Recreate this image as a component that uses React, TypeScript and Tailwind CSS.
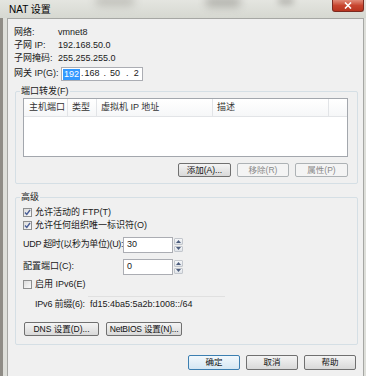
import React from "react";

type BtnProps = {
  children: React.ReactNode;
  className?: string;
  disabled?: boolean;
  focused?: boolean;
};

const Btn = ({ children, className = "", disabled, focused }: BtnProps) => {
  const look = disabled
    ? "border-[#adb2b5] bg-[#f4f4f4] text-[#8a8a8a]"
    : focused
      ? "border-[#3c7fb1] bg-linear-to-b from-[#f2f8fc] to-[#d5e7f3] text-[#111]"
      : "border-[#707070] bg-linear-to-b from-[#f4f4f4] to-[#d9d9d9] text-[#111]";
  return (
    <div
      className={`flex items-center justify-center rounded-[2px] border text-[8.5px] leading-none ${look} ${className}`}
    >
      {children}
    </div>
  );
};

const CheckBox = ({ checked, label }: { checked?: boolean; label: string }) => (
  <div className="flex h-[13px] items-center">
    <div className="flex h-[9px] w-[9px] items-center justify-center border border-[#8e8f8f] bg-linear-to-br from-[#dcdcdc] to-[#fbfbfb]">
      {checked && (
        <svg width="7" height="7" viewBox="0 0 7 7">
          <path d="M1 3.5 L2.8 5.5 L6 1" fill="none" stroke="#4a5f97" strokeWidth="1.4" />
        </svg>
      )}
    </div>
    <span className="ml-[3px]">{label}</span>
  </div>
);

const Spinner = ({ value }: { value: string }) => (
  <div className="flex h-[16px]">
    <div className="flex w-[50px] items-center border border-[#abadb3] bg-white pl-[3px]">{value}</div>
    <div className="flex w-[11px] flex-col gap-[1px] px-[1px] py-[1px]">
      {["up", "down"].map((d) => (
        <div
          key={d}
          className="flex flex-1 items-center justify-center rounded-[1px] border border-[#c3c7cd] bg-linear-to-b from-[#f6f7f9] to-[#dfe3e8]"
        >
          <svg width="5" height="3" viewBox="0 0 5 3">
            <path d={d === "up" ? "M0 3 L2.5 0 L5 3 Z" : "M0 0 L2.5 3 L5 0 Z"} fill="#4d5d7d" />
          </svg>
        </div>
      ))}
    </div>
  </div>
);

const GroupBox = ({ title, className = "", children }: { title: string; className?: string; children: React.ReactNode }) => (
  <div className={`relative ml-[7px] w-[343px] rounded-[2px] border border-[#d5dfe5] ${className}`}>
    <span className="absolute -top-[7px] left-[4px] bg-[#f0f0f0] px-[1px] leading-[13px]">{title}</span>
    {children}
  </div>
);

export default function App() {
  return (
    <div className="flex h-[376px] w-[366px] flex-col overflow-hidden whitespace-nowrap bg-[#dcddd7] text-[9px] text-[#1a1a1a] [font-family:'Liberation_Sans','Noto_Sans_CJK_SC',sans-serif]">
      {/* title bar */}
      <div className="relative flex h-[18px] shrink-0 items-center bg-linear-to-b from-[#e4e5e0] to-[#d6d8d1] pl-[9px]">
        <div className="absolute left-[95px] top-[-4px] h-[10px] w-[40px] rounded-full bg-[#8d8b84] opacity-40 blur-[4px]" />
        <div className="absolute left-[205px] top-[-3px] h-[10px] w-[36px] rounded-full bg-[#77756f] opacity-45 blur-[4px]" />
        <div className="absolute left-[278px] top-[-3px] h-[8px] w-[16px] rounded-full bg-[#77756f] opacity-40 blur-[3px]" />
        <span className="relative text-[10px] text-black">NAT 设置</span>
        <div className="absolute right-[2px] top-0 flex h-[12px] w-[32px] items-center justify-center rounded-b-[3px] border border-t-0 border-[#7b2a20] bg-linear-to-b from-[#e08a78] via-[#c7452f] to-[#b8341f]">
          <svg width="8" height="7" viewBox="0 0 8 7">
            <path d="M1 0.5 L7 6.5 M7 0.5 L1 6.5" stroke="white" strokeWidth="1.6" />
          </svg>
        </div>
      </div>

      <div className="flex flex-1">
        {/* left frame */}
        <div className="flex w-[8px] shrink-0">
          <div className="w-[3px] bg-[#8f8c86]" />
          <div className="w-[4px] bg-[#dedfda]" />
          <div className="w-[1px] bg-[#a6a7a4]" />
        </div>

        {/* client */}
        <div className="flex w-[355px] flex-col border-t border-[#a6a7a4] bg-[#f0f0f0]">
          <div className="ml-[6px] pt-[7px]">
            <div className="flex h-[13px] items-center">
              <span className="w-[44px]">网络:</span>
              <span>vmnet8</span>
            </div>
            <div className="flex h-[13px] items-center">
              <span className="w-[44px]">子网 IP:</span>
              <span>192.168.50.0</span>
            </div>
            <div className="flex h-[13px] items-center">
              <span className="w-[44px]">子网掩码:</span>
              <span>255.255.255.0</span>
            </div>
            <div className="mt-[2px] flex h-[14px] items-center">
              <span className="w-[47px]">网关 IP(G):</span>
              <div className="flex h-[14px] w-[82px] items-center border border-[#abadb3] bg-white pl-[1px]">
                <span className="bg-[#3399ff] px-[1px] leading-[11px] text-white">192</span>
                <span className="ml-[1px]">.</span>
                <span className="ml-[1px]">168</span>
                <span className="ml-[4px]">.</span>
                <span className="ml-[4px]">50</span>
                <span className="ml-[6px]">.</span>
                <span className="ml-[5px]">2</span>
              </div>
            </div>
          </div>

          <GroupBox title="端口转发(F)" className="mt-[10px] pb-[6px] pt-[6px]">
            <div className="ml-[7px] flex h-[59px] w-[325px] flex-col border border-[#a3a7ad] bg-white">
              <div className="flex h-[18px] border-b border-[#e2e4e7] bg-linear-to-b from-white to-[#f6f7f8] text-[#333]">
                <div className="flex w-[44px] items-center border-r border-[#e2e4e7] pl-[5px]">主机端口</div>
                <div className="flex w-[29px] items-center border-r border-[#e2e4e7] pl-[4px]">类型</div>
                <div className="flex w-[116px] items-center border-r border-[#e2e4e7] pl-[4px]">虚拟机 IP 地址</div>
                <div className="flex w-[116px] items-center border-r border-[#e2e4e7] pl-[4px]">描述</div>
                <div className="flex-1" />
              </div>
            </div>
            <div className="ml-[162px] mt-[6px] flex gap-[6px]">
              <Btn className="h-[14px] w-[53px]">添加(A)...</Btn>
              <Btn className="h-[14px] w-[52px]" disabled>移除(R)</Btn>
              <Btn className="h-[14px] w-[53px]" disabled>属性(P)</Btn>
            </div>
          </GroupBox>

          <GroupBox title="高级" className="mt-[13px] pb-[8px] pl-[7px] pt-[8px]">
            <CheckBox checked label="允许活动的 FTP(T)" />
            <CheckBox checked label="允许任何组织唯一标识符(O)" />
            <div className="mt-[5px] flex items-center">
              <span className="w-[100px] tracking-[-0.3px]">UDP 超时(以秒为单位)(U):</span>
              <Spinner value="30" />
            </div>
            <div className="mt-[6px] flex items-center">
              <span className="w-[100px]">配置端口(C):</span>
              <Spinner value="0" />
            </div>
            <div className="mt-[3px]">
              <CheckBox label="启用 IPv6(E)" />
            </div>
            <div className="mt-[5px] flex h-[17px] items-center">
              <span className="ml-[12px] w-[53px] tracking-[-0.2px]">IPv6 前缀(6):</span>
              <div className="flex h-[17px] w-[137px] items-center border-t border-[#e0e0e0] pl-[2px]">
                fd15:4ba5:5a2b:1008::/64
              </div>
            </div>
            <div className="mt-[9px] flex gap-[7px] pl-[1px]">
              <Btn className="h-[14px] w-[75px]">DNS 设置(D)...</Btn>
              <Btn className="h-[14px] w-[76px] tracking-[-0.2px]">NetBIOS 设置(N)...</Btn>
            </div>
          </GroupBox>

          <div className="mr-[7px] mt-[10px] flex justify-end gap-[6px]">
            <Btn className="h-[15px] w-[52px]" focused>确定</Btn>
            <Btn className="h-[15px] w-[52px]">取消</Btn>
            <Btn className="h-[15px] w-[52px]">帮助</Btn>
          </div>
        </div>

        {/* right frame */}
        <div className="flex w-[3px] shrink-0">
          <div className="w-[1px] bg-[#a6a7a4]" />
          <div className="flex-1 bg-[#dedfda]" />
        </div>
      </div>
    </div>
  );
}
